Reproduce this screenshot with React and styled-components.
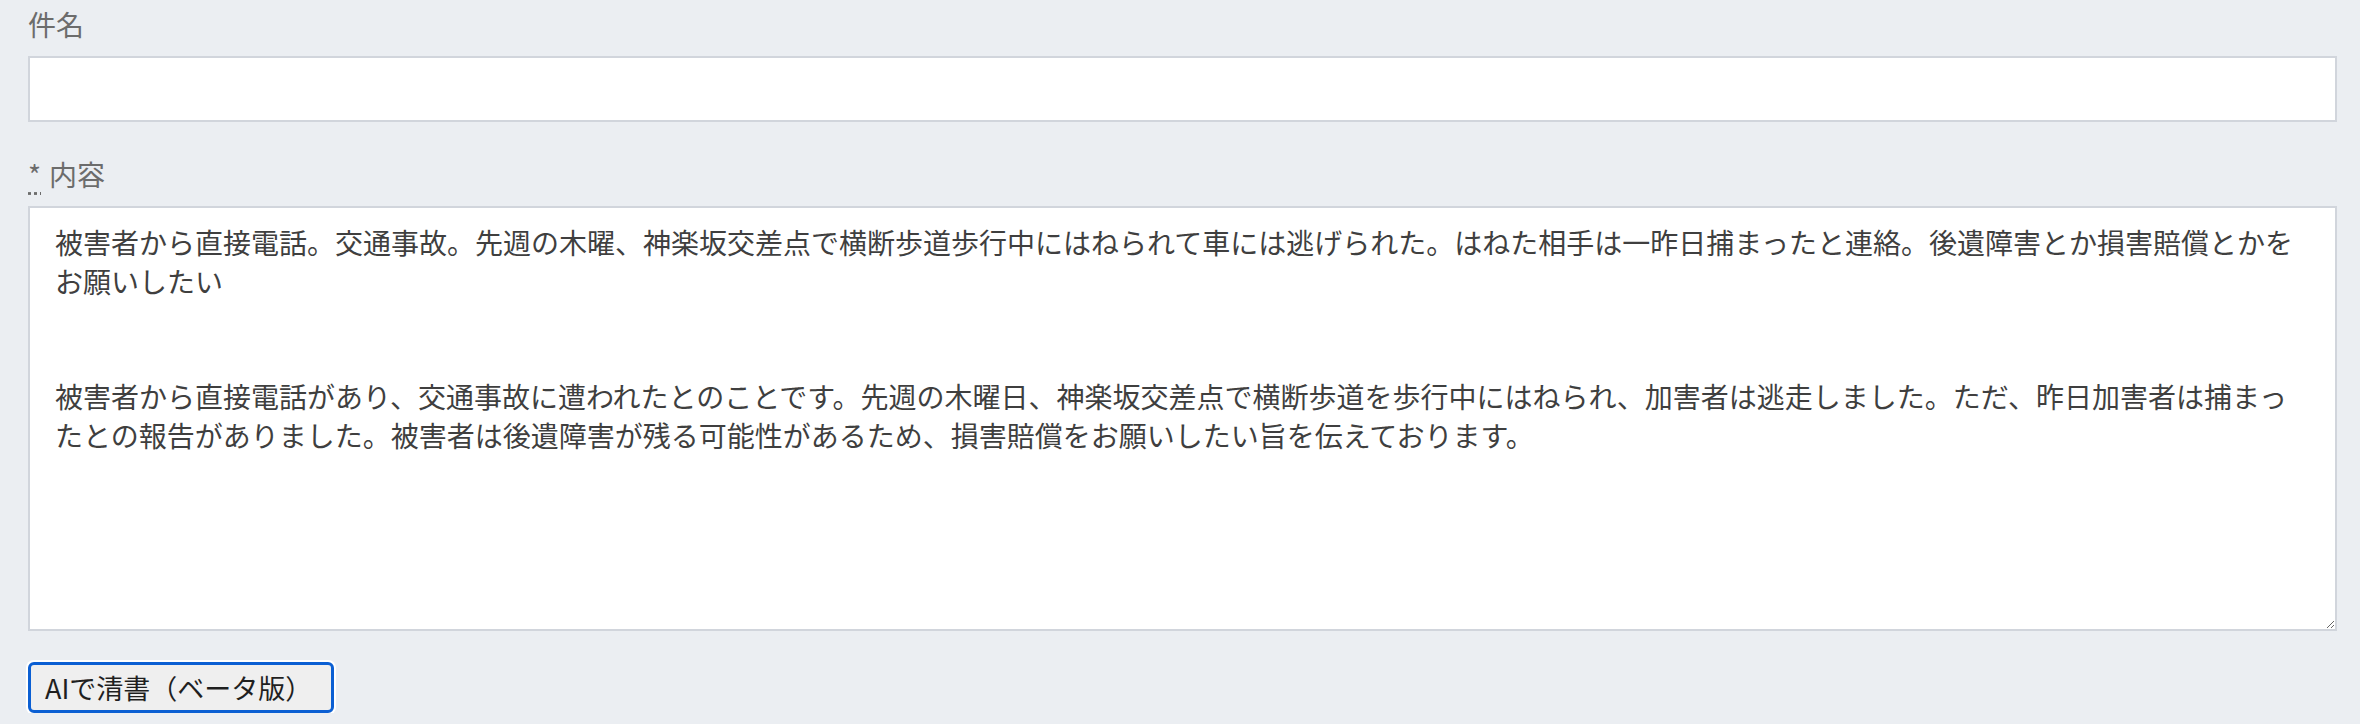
import { useState } from "react";
import styled, { createGlobalStyle } from "styled-components";

const GlobalStyle = createGlobalStyle`
  body {
    margin: 0;
    background: #ebeef2;
    font-family: "Noto Sans CJK JP", "Noto Sans", sans-serif;
  }
`;

const Form = styled.form`
  display: flex;
  flex-direction: column;
  padding: 3px 23px 0 28px;
`;

const Field = styled.div`
  display: flex;
  flex-direction: column;
  margin-bottom: 31px;
`;

const Label = styled.label`
  font-size: 28px;
  line-height: 42px;
  color: #6c6c6c;
  margin-bottom: 11px;
`;

const Required = styled.abbr`
  text-decoration: underline dotted;
  text-underline-offset: 6px;
  margin-right: 8px;
`;

const TextInput = styled.input`
  box-sizing: border-box;
  height: 66px;
  border: 2px solid #d1d5dc;
  background: #fff;
  padding: 0 25px;
  font: inherit;
  font-size: 28px;
  color: #3f3f3f;
  outline: none;
`;

const TextArea = styled.textarea`
  box-sizing: border-box;
  height: 425px;
  border: 2px solid #d1d5dc;
  background: #fff;
  padding: 15px 25px;
  font-family: "Noto Sans CJK JP", sans-serif;
  font-size: 28px;
  line-height: 38.6px;
  color: #3f3f3f;
  outline: none;
  resize: vertical;
`;

const Button = styled.button`
  align-self: flex-start;
  box-sizing: border-box;
  height: 51px;
  padding: 0 19px 0 14px;
  background: #efefef;
  border: 3px solid #0b5fd3;
  border-radius: 6px;
  box-shadow: 0 0 0 2px #fff;
  font-family: "Noto Sans CJK JP", sans-serif;
  font-size: 27px;
  color: #1f1f1f;
  cursor: pointer;
`;

const initialBody =
  "被害者から直接電話。交通事故。先週の木曜、神楽坂交差点で横断歩道歩行中にはねられて車には逃げられた。はねた相手は一昨日捕まったと連絡。後遺障害とか損害賠償とかをお願いしたい\n\n\n" +
  "被害者から直接電話があり、交通事故に遭われたとのことです。先週の木曜日、神楽坂交差点で横断歩道を歩行中にはねられ、加害者は逃走しました。ただ、昨日加害者は捕まったとの報告がありました。被害者は後遺障害が残る可能性があるため、損害賠償をお願いしたい旨を伝えております。";

export default function App() {
  const [subject, setSubject] = useState("");
  const [body, setBody] = useState(initialBody);

  return (
    <>
      <GlobalStyle />
      <Form onSubmit={(e) => e.preventDefault()}>
        <Field>
          <Label htmlFor="subject">件名</Label>
          <TextInput
            id="subject"
            value={subject}
            onChange={(e) => setSubject(e.target.value)}
          />
        </Field>
        <Field>
          <Label htmlFor="body">
            <Required title="required">*</Required>内容
          </Label>
          <TextArea
            id="body"
            value={body}
            onChange={(e) => setBody(e.target.value)}
          />
        </Field>
        <Button type="button">AIで清書（ベータ版）</Button>
      </Form>
    </>
  );
}
